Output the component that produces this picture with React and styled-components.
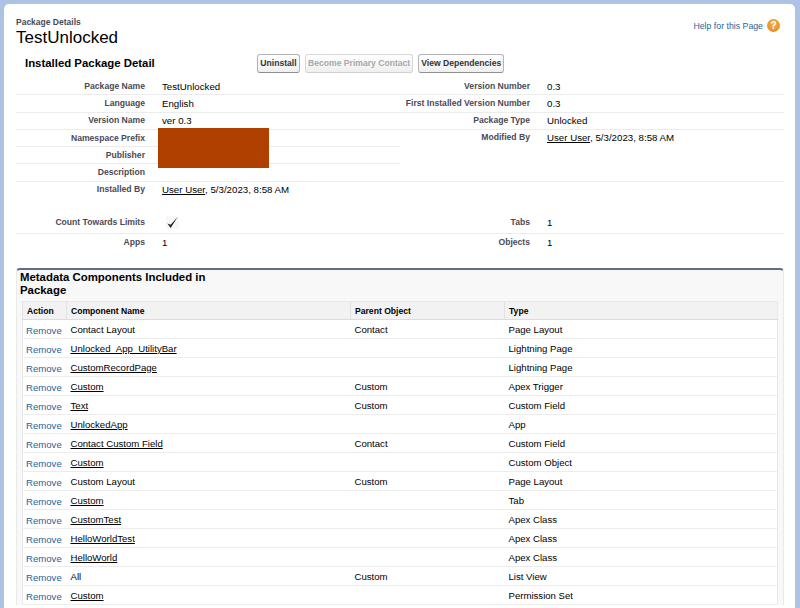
import styled, { createGlobalStyle } from "styled-components";

const GlobalStyle = createGlobalStyle`
  html, body {
    margin: 0;
    height: 608px;
    overflow: hidden;
    background: #adc3e3;
    font-family: "Liberation Sans", Arial, sans-serif;
  }
`;

const Page = styled.div`
  height: 608px;
  padding: 4px 5px 0 4px;
  box-sizing: border-box;
  background: #adc3e3;
`;

const Sheet = styled.div`
  height: 604px;
  box-sizing: border-box;
  background: #fff;
  border-radius: 5px 5px 0 0;
  padding: 13px 11px 0 12px;
  overflow: hidden;
`;

const PageHeader = styled.div`
  display: flex;
  justify-content: space-between;
  align-items: flex-start;
  height: 34px;
`;

const Crumb = styled.div`
  font-size: 8.5px;
  line-height: 11px;
  font-weight: bold;
  color: #4a4a56;
`;

const Title = styled.h1`
  margin: 0;
  font-size: 17px;
  line-height: 19px;
  font-weight: normal;
  color: #000;
`;

const HelpLink = styled.a`
  display: flex;
  align-items: center;
  gap: 4px;
  margin: 2px 4px 0 0;
  font-size: 8.75px;
  color: #2a6496;
`;

const HelpIcon = styled.span`
  width: 13px;
  height: 13px;
  border-radius: 50%;
  background: radial-gradient(circle at 50% 40%, #f3b24a, #dd861d);
  color: #fff;
  font-size: 10px;
  line-height: 13px;
  font-weight: bold;
  text-align: center;
`;

const DetailHeader = styled.div`
  display: flex;
  align-items: center;
  height: 24px;
  padding-left: 9px;
`;

const DetailTitle = styled.h2`
  width: 232px;
  margin: 0;
  font-size: 11.4px;
  font-weight: bold;
  color: #000;
`;

const ButtonRow = styled.div`
  display: flex;
  gap: 5px;
`;

const Button = styled.button`
  height: 19px;
  min-width: 43px;
  padding: 0 2px;
  font-family: inherit;
  font-size: 8.6px;
  font-weight: bold;
  color: ${(p) => (p.disabled ? "#a8a8a8" : "#333")};
  background: linear-gradient(#fff, #efefef);
  border: 1px solid ${(p) => (p.disabled ? "#d8d8d8" : "#b5b5b5")};
  border-bottom-color: ${(p) => (p.disabled ? "#d0d0d0" : "#8f8f8f")};
  border-radius: 3px;
`;

const DetailGrid = styled.div`
  position: relative;
  display: grid;
  grid-template-columns: 384px 384px;
  margin-top: ${(p) => p.$gap || 0}px;
`;

const Column = styled.div`
  display: flex;
  flex-direction: column;
`;

const Field = styled.div`
  display: grid;
  grid-template-columns: ${(p) => p.$labelWidth}px 1fr;
  column-gap: 17px;
  align-items: ${(p) => (p.$top ? "start" : "center")};
  height: ${(p) => p.$height || 17.3}px;
  line-height: 15px;
  box-sizing: border-box;
  border-bottom: 1px solid ${(p) => (p.$plain ? "transparent" : "#ececec")};
  font-size: 9.7px;
  color: #000;
`;

const Label = styled.span`
  text-align: right;
  white-space: nowrap;
  font-size: 8.6px;
  font-weight: bold;
  color: #4a4a56;
`;

const UserLink = styled.span`
  text-decoration: underline;
`;

const Redaction = styled.div`
  position: absolute;
  left: 142px;
  top: 50px;
  width: 111px;
  height: 40px;
  background: #b04000;
`;

const Check = styled.svg`
  display: block;
  margin-left: 4px;
  background: #f7f7f7;
`;

const RelatedPanel = styled.section`
  margin-top: 16px;
  background: #f8f8f8;
  border-top: 2px solid #5d6e88;
  border-left: 1px solid #eaeaea;
  border-right: 1px solid #eaeaea;
  border-radius: 4px 4px 0 0;
  padding: 1px 6px 0 3px;
`;

const RelatedTitle = styled.h3`
  width: 200px;
  margin: 0 0 4px;
  font-size: 11.4px;
  line-height: 13px;
  font-weight: bold;
  color: #000;
`;

const Table = styled.table`
  width: 756px;
  margin-left: 2px;
  table-layout: fixed;
  border-collapse: collapse;
  background: #fff;
  border: 1px solid #e8e8e8;
  font-size: 9.6px;
  color: #000;
`;

const HeadCell = styled.th`
  height: 18px;
  padding: 0 4px;
  box-sizing: border-box;
  text-align: left;
  font-size: 8.6px;
  font-weight: bold;
  background: #f2f2f2;
  border-left: 1px solid #e2e2e2;
  border-bottom: 1px solid #dcdcdc;
`;

const Cell = styled.td`
  height: 19px;
  padding: 0 4px;
  box-sizing: border-box;
  border-bottom: 1px solid #ececec;
  text-decoration: ${(p) => (p.$link ? "underline" : "none")};
`;

const RemoveCell = styled(Cell)`
  padding: 2px 0 0 3px;
  color: #2a6496;
`;

const leftFields = [
  ["Package Name", "TestUnlocked"],
  ["Language", "English"],
  ["Version Name", "ver 0.3"],
  ["Namespace Prefix", ""],
  ["Publisher", ""],
  ["Description", ""],
];

const rightFields = [
  ["Version Number", "0.3"],
  ["First Installed Version Number", "0.3"],
  ["Package Type", "Unlocked"],
];

const components = [
  ["Contact Layout", false, "Contact", "Page Layout"],
  ["Unlocked_App_UtilityBar", true, "", "Lightning Page"],
  ["CustomRecordPage", true, "", "Lightning Page"],
  ["Custom", true, "Custom", "Apex Trigger"],
  ["Text", true, "Custom", "Custom Field"],
  ["UnlockedApp", true, "", "App"],
  ["Contact Custom Field", true, "Contact", "Custom Field"],
  ["Custom", true, "", "Custom Object"],
  ["Custom Layout", false, "Custom", "Page Layout"],
  ["Custom", true, "", "Tab"],
  ["CustomTest", true, "", "Apex Class"],
  ["HelloWorldTest", true, "", "Apex Class"],
  ["HelloWorld", true, "", "Apex Class"],
  ["All", false, "Custom", "List View"],
  ["Custom", true, "", "Permission Set"],
];

export default function App() {
  return (
    <>
      <GlobalStyle />
      <Page>
        <Sheet>
          <PageHeader>
            <div>
              <Crumb>Package Details</Crumb>
              <Title>TestUnlocked</Title>
            </div>
            <HelpLink>
              Help for this Page
              <HelpIcon>?</HelpIcon>
            </HelpLink>
          </PageHeader>
          <DetailHeader>
            <DetailTitle>Installed Package Detail</DetailTitle>
            <ButtonRow>
              <Button>Uninstall</Button>
              <Button disabled>Become Primary Contact</Button>
              <Button>View Dependencies</Button>
            </ButtonRow>
          </DetailHeader>
          <DetailGrid $gap={3}>
            <Column>
              {leftFields.map(([label, value]) => (
                <Field key={label} $labelWidth={129}>
                  <Label>{label}</Label>
                  <span>{value}</span>
                </Field>
              ))}
              <Field $labelWidth={129} $plain>
                <Label>Installed By</Label>
                <span>
                  <UserLink>User User</UserLink>, 5/3/2023, 8:58 AM
                </span>
              </Field>
            </Column>
            <Column>
              {rightFields.map(([label, value]) => (
                <Field key={label} $labelWidth={130}>
                  <Label>{label}</Label>
                  <span>{value}</span>
                </Field>
              ))}
              <Field $labelWidth={130} $height={52} $top>
                <Label>Modified By</Label>
                <span>
                  <UserLink>User User</UserLink>, 5/3/2023, 8:58 AM
                </span>
              </Field>
            </Column>
            <Redaction />
          </DetailGrid>
          <DetailGrid $gap={13}>
            <Column>
              <Field $labelWidth={129} $height={22}>
                <Label>Count Towards Limits</Label>
                <Check width="13" height="13" viewBox="0 0 14 14">
                  <path d="M1.5 8 L5 13 L12.5 1 L5 9.5 Z" fill="#222" />
                </Check>
              </Field>
              <Field $labelWidth={129} $height={18} $plain>
                <Label>Apps</Label>
                <span>1</span>
              </Field>
            </Column>
            <Column>
              <Field $labelWidth={130} $height={22}>
                <Label>Tabs</Label>
                <span>1</span>
              </Field>
              <Field $labelWidth={130} $height={18} $plain>
                <Label>Objects</Label>
                <span>1</span>
              </Field>
            </Column>
          </DetailGrid>
          <RelatedPanel>
            <RelatedTitle>Metadata Components Included in Package</RelatedTitle>
            <Table>
              <colgroup>
                <col style={{ width: 44 }} />
                <col style={{ width: 284 }} />
                <col style={{ width: 154 }} />
                <col />
              </colgroup>
              <thead>
                <tr>
                  <HeadCell>Action</HeadCell>
                  <HeadCell>Component Name</HeadCell>
                  <HeadCell>Parent Object</HeadCell>
                  <HeadCell>Type</HeadCell>
                </tr>
              </thead>
              <tbody>
                {components.map(([name, link, parent, type], i) => (
                  <tr key={i}>
                    <RemoveCell>Remove</RemoveCell>
                    <Cell $link={link}>{name}</Cell>
                    <Cell>{parent}</Cell>
                    <Cell>{type}</Cell>
                  </tr>
                ))}
              </tbody>
            </Table>
          </RelatedPanel>
        </Sheet>
      </Page>
    </>
  );
}
